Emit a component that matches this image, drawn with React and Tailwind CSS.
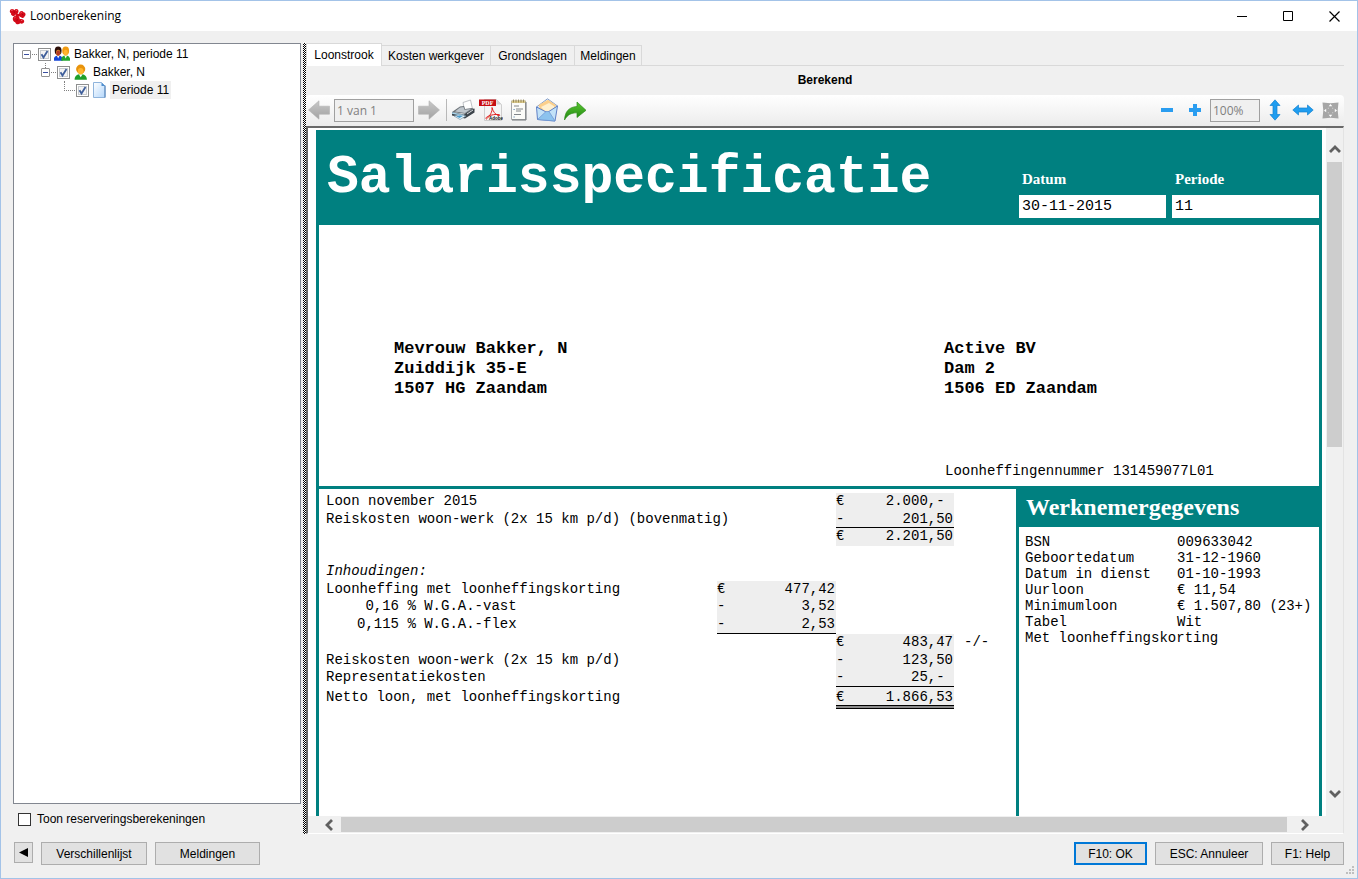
import { useState } from 'react';

const mono = "font-['Liberation_Mono','Courier_New',monospace]";
const serif = "font-['Liberation_Serif','Times_New_Roman',serif]";

const tabs = [
  { name: 'Loonstrook', width: 'w-[76px]' },
  { name: 'Kosten werkgever', width: 'w-[109px]' },
  { name: 'Grondslagen', width: 'w-[84px]' },
  { name: 'Meldingen', width: 'w-[67px]' },
];

const employee = [
  ['BSN', '009633042'],
  ['Geboortedatum', '31-12-1960'],
  ['Datum in dienst', '01-10-1993'],
  ['Uurloon', '€ 11,54'],
  ['Minimumloon', '€ 1.507,80 (23+)'],
  ['Tabel', 'Wit'],
];

const payRows = [
  { label: 'Loon november 2015', total: ['€', '2.000,- '] },
  { label: 'Reiskosten woon-werk (2x 15 km p/d) (bovenmatig)', total: ['-', '201,50'], line: true, tight: true },
  { label: '', total: ['€', '2.201,50'] },
  { label: '', tight: true },
  { label: 'Inhoudingen:', italic: true },
  { label: 'Loonheffing met loonheffingskorting', sub: ['€', '477,42'], tight: true },
  { percent: '0,16', label: ' % W.G.A.-vast', sub: ['-', '3,52'] },
  { percent: '0,115', label: ' % W.G.A.-flex', sub: ['-', '2,53'], line: true },
  { label: '', total: ['€', '483,47'], suffix: '-/-' },
  { label: 'Reiskosten woon-werk (2x 15 km p/d)', total: ['-', '123,50'], tight: true },
  { label: 'Representatiekosten', total: ['-', '25,- '], line: true },
  { label: 'Netto loon, met loonheffingskorting', total: ['€', '1.866,53'], final: true },
];

function Logo() {
  return (
    <svg className="h-[17px] w-[17px]" viewBox="0 0 17 17">
      <g fill="#d40a18">
        <path d="M.8 3.200C1 .8 4 .2 5.400 2.200 6.500.2 9.600.8 9.500 3.200c0 1.600-1 2.800-2.600 3-.5 1.700-2.500 2.200-3.900 1.200C1.600 6.500 2 5.500 2.200 5.200 1.300 5 .8 4.200.8 3.200z" />
        <path d="M10.200 5.200c.3-2.300 3.300-2.800 4.400-1 2.200.3 2.600 3 .9 4.200-.4 1.600-2.800 2-4 .7-1.700-.4-2-2.400-1.300-3.900z" />
        <path d="M3.800 10.200c.4-2.600 3.400-3.400 4.800-1.600 1.800 0 2.400 1.500 2 2.700 2-.9 4.900 0 4.600 2.300-.3 2-2.600 2.600-4 1.700-1.500 1.700-4.700 1.200-5-1-1.600-.6-2.700-2.300-2.400-4.100z" />
        <circle cx="8.500" cy="7.400" r="1.800" />
      </g>
      <path d="M2.300 2.600l1.600-.7M6.800 2.500l1.200-.3M11.500 5l1.300-.8M5.300 10l1.300-.9M12 12.500l1.300-.2" stroke="#f2606c" strokeWidth="1" />
      <path d="M5.300 3.500v1.200M13 6.500l1.200.3M7.500 12.200l1.400-.4" stroke="#8e0410" strokeWidth=".8" />
    </svg>
  );
}

function Person({ hair, body, x = 0 }) {
  return (
    <g transform={`translate(${x} 0)`}>
      <path d="M-.5 14.800c0-3.500 1.800-5.300 5.700-5.300s5.800 1.800 5.800 5.300z" fill={body} />
      <path d="M3.500 9.500L5.200 12.500 7 9.500z" fill="#fff" />
      <circle cx="5.200" cy="4.800" r="4.300" fill={hair} />
      <ellipse cx="5.200" cy="6.800" rx="2.600" ry="3" fill="#ffb52e" />
    </g>
  );
}

function GroupIcon() {
  return (
    <svg className="h-4 w-4" viewBox="0 0 20 16" preserveAspectRatio="none">
      <Person hair="#2a0d08" body="#1446d8" />
      <ellipse cx="5.200" cy="7" rx="2.400" ry="2.800" fill="#b03a24" />
      <Person hair="#f09a10" body="#22a52c" x={9.400} />
    </svg>
  );
}

function PersonIcon() {
  return (
    <svg className="h-4 w-4" viewBox="-2 0 15 15">
      <Person hair="#e8930c" body="#1f9f2a" />
    </svg>
  );
}

function PageIcon() {
  return (
    <svg className="h-4 w-4" viewBox="0 0 16 16">
      <defs>
        <linearGradient id="page" x1="0" y1="0" x2="1" y2="1">
          <stop offset="0" stopColor="#ffffff" />
          <stop offset="1" stopColor="#b4d7fb" />
        </linearGradient>
      </defs>
      <path d="M1.500.5h8l3.500 3.500v11.500H1.500z" fill="url(#page)" stroke="#8fb4dc" />
      <path d="M9.500.5L13 4H9.500z" fill="#4f8fd0" />
      <path d="M13 3.500v12" stroke="#4f7fb5" />
    </svg>
  );
}

function TreeCheck({ id }) {
  const [checked, setChecked] = useState(true);
  return (
    <span className="relative h-[13px] w-[13px] shrink-0">
      <input id={id} type="checkbox" checked={checked} onChange={(e) => setChecked(e.target.checked)}
        className="block h-[13px] w-[13px] appearance-none border border-[#8e8f8f] bg-[#f4f4f4] shadow-[inset_0_0_0_1px_#fff,inset_0_0_0_2px_#c8ccd0]" />
      {checked && (
        <svg className="pointer-events-none absolute inset-0 h-[13px] w-[13px]" viewBox="0 0 13 13">
          <path d="M3.500 6.200l2 3.300 4-6.500" fill="none" stroke="#3f5f9b" strokeWidth="1.800" />
        </svg>
      )}
    </span>
  );
}

function Expander({ label }) {
  return (
    <button aria-label={label} className="flex h-[9px] w-[9px] shrink-0 items-center justify-center rounded-[1px] border border-[#919191] bg-white">
      <span className="h-px w-[5px] bg-[#3a4fa0]" />
    </button>
  );
}

function Chevron({ className = '' }) {
  return (
    <svg className={`h-3 w-3 ${className}`} viewBox="0 0 12 12">
      <path d="M1 9l5-5 5 5" fill="none" stroke="#606060" strokeWidth="2.800" />
    </svg>
  );
}

function GreyArrow({ flip }) {
  return (
    <svg className={flip ? 'h-5 w-[22px] -scale-x-100' : 'h-5 w-[22px]'} viewBox="0 0 22 20">
      <defs>
        <linearGradient id="grey" x1="0" y1="0" x2="0" y2="1">
          <stop offset="0" stopColor="#c8c8c8" />
          <stop offset="1" stopColor="#a2a2a2" />
        </linearGradient>
      </defs>
      <path d="M.5 10L11 .8v5.400h10.500v8H11v5z" fill="url(#grey)" stroke="#b4b4b4" strokeWidth=".6" />
    </svg>
  );
}

function PrinterIcon() {
  return (
    <svg className="h-6 w-6" viewBox="0 0 24 24">
      <path d="M12 4.500l7.500-2.500 2 9-8 1.500z" fill="#fff" stroke="#a5a9ae" strokeWidth=".7" />
      <path d="M1 14l8-5.500 4-.5 1 3 7-1 2.500 1-4 5.500z" fill="#6b7278" />
      <path d="M1 14l12 2.500 10.500-6v4L14 20.500 1 17.500z" fill="#3c434a" />
      <path d="M9 9.500l3.500-.5 1 2.800 6.500-.8-6 4-10-1.500z" fill="#bfc6cc" />
      <path d="M1 14.200l12 2.500v1.600L1 15.800z" fill="#a9d3ea" />
      <path d="M3 18l6-1.500 6 1.500-6 3.500z" fill="#e8f4fb" stroke="#6c8ba0" strokeWidth=".6" />
      <path d="M5 18.200l4-1 3 .8-3.500 2z" fill="#4b9ccc" />
      <path d="M16 16l6-4" stroke="#d9dde0" />
    </svg>
  );
}

function PdfIcon() {
  return (
    <svg className="h-6 w-6" viewBox="0 0 24 24">
      <path d="M5.500 1.500h12l5 5v16h-17z" fill="#f5f5f5" stroke="#c4c4c4" strokeWidth=".8" />
      <path d="M17.500 1.500v5h5z" fill="#d2d2d2" />
      <path d="M0 1.500h17v6.500H0z" fill="#c60d12" />
      <text x="8.500" y="7" textAnchor="middle" fontSize="6" fontWeight="bold" fill="#fff" fontFamily="Liberation Serif, serif">PDF</text>
      <path d="M13 9.500c.8 4-2.500 9-5.500 11.500-1 0-.8-1.500 1-2.500 3.500-1.800 8.500-2.500 12-1.800 1 .8-.5 1.300-1.500.8-3-1.500-5-4-6-8z" fill="none" stroke="#e02020" strokeWidth="1" />
      <text x="17" y="22" textAnchor="middle" fontSize="4.500" fontWeight="bold" fill="#111" fontFamily="Liberation Sans, sans-serif">Adobe</text>
    </svg>
  );
}

function NotepadIcon() {
  return (
    <svg className="h-6 w-6" viewBox="0 0 24 24">
      <path d="M4.500 3h14v18.500h-14z" fill="#fbfbf8" stroke="#a3a5a8" />
      <path d="M4.500 2.500h14v2.500h-14z" fill="#d9c98c" />
      <path d="M6.500 1.500v3M9 1.500v3M11.500 1.500v3M14 1.500v3M16.500 1.500v3" stroke="#8a7a48" strokeWidth=".8" />
      <path d="M7 8h5M9 11h7M9 13h5M7 16.500h7" stroke="#74787e" strokeWidth=".9" />
      <path d="M6.500 11.500h1.200M6.500 19h1.200" stroke="#5a8ab8" strokeWidth="1" />
      <path d="M19 4v18H5" fill="none" stroke="#73767a" strokeWidth="1" />
    </svg>
  );
}

function MailIcon() {
  return (
    <svg className="h-6 w-6" viewBox="0 0 24 24">
      <path d="M1.500 9L12.500.8l10 7.200-10 8z" fill="#e7f0fa" stroke="#7f9ccb" />
      <path d="M3.500 7L13 1.800 21 7l-2 8-8 .5-6-4z" fill="#fbcf8c" />
      <path d="M6 9l8-4 5.500 3.500-2.500 5-6 1z" fill="#fff0cf" />
      <path d="M1.500 9l1 12.500L20 23l2.500-15-10.300 6.500z" fill="#c2e2f8" stroke="#5f80c6" />
      <path d="M2.500 21.500l8.500-8h3l6 9.500z" fill="#8cc3ee" stroke="#6d92d0" strokeWidth=".7" />
    </svg>
  );
}

function ForwardIcon() {
  return (
    <svg className="h-6 w-6" viewBox="0 0 24 24">
      <defs>
        <linearGradient id="green" x1="0" y1="0" x2="0" y2="1">
          <stop offset="0" stopColor="#5cc832" />
          <stop offset="1" stopColor="#1d8410" />
        </linearGradient>
      </defs>
      <path d="M1.500 22c.5-8 4-13 12.500-13.500V4l9 8.300-9 7.200v-4.700c-6 0-9.500 2-12.500 7.200z" fill="url(#green)" stroke="#2c8c1a" strokeWidth=".7" />
    </svg>
  );
}

function DoubleArrow({ vertical }) {
  return (
    <svg className={vertical ? 'h-[22px] w-[22px] rotate-90' : 'h-[22px] w-[22px]'} viewBox="0 0 22 22">
      <path d="M.8 11L6.500 6v3h9V6l5.700 5-5.700 5v-3h-9v3z" fill="#1f9df0" stroke="#1583cf" strokeWidth=".7" />
    </svg>
  );
}

function FullIcon() {
  return (
    <svg className="h-[17px] w-[17px]" viewBox="0 0 17 17">
      <path d="M.5.5l8 .8 8-.8-.8 8 .8 8-8-.8-8 .8.800-8z" fill="#a6a6a6" />
      <path d="M8.500 2l1.800 2.200H6.700zM8.500 15l1.800-2.200H6.700zM2 8.500l2.200-1.800v3.600zM15 8.500l-2.200-1.800v3.600z" fill="#fff" />
      <path d="M5.800 5.800h1v1h-1zM10.200 5.800h1v1h-1zM5.800 10.200h1v1h-1zM10.200 10.200h1v1h-1z" fill="#d4d4d4" />
    </svg>
  );
}

function Amount({ value, line }) {
  if (!value) return <><td /><td /></>;
  const border = line ? 'border-b border-black' : '';
  return (
    <>
      <td className={`bg-[#eeeeee] ${border}`}>{value[0]}</td>
      <td className={`whitespace-pre bg-[#eeeeee] pr-px text-right ${border}`}>{value[1]}</td>
    </>
  );
}

function PayTable() {
  return (
    <table className="w-full table-fixed border-separate border-spacing-0 text-sm leading-4">
      <colgroup>
        <col className="w-[398px]" />
        <col className="w-5" />
        <col className="w-[99px]" />
        <col className="w-5" />
        <col className="w-[98px]" />
        <col />
      </colgroup>
      <tbody>
        {payRows.map((row, i) => (
          <tr key={i} className={`${row.tight ? 'h-[17px]' : 'h-[18px]'} ${row.final ? 'align-bottom' : 'align-top'}`}>
            <td className={`whitespace-pre pl-[7px] ${row.italic ? 'italic' : ''}`}>
              {row.percent && <span className="inline-block w-[73px] text-right">{row.percent}</span>}
              {row.label}
            </td>
            <Amount value={row.sub} line={row.line} />
            <Amount value={row.total} line={row.line} />
            <td className="pl-2.5">{row.suffix}</td>
          </tr>
        ))}
        <tr className="h-1">
          <td colSpan={3} />
          <td colSpan={2} className="border-y border-black bg-[#8c8c8c]" />
          <td />
        </tr>
      </tbody>
    </table>
  );
}

function Payslip() {
  return (
    <article className={`flex min-h-full flex-col border-x-[3px] border-[#008080] text-black ${mono}`}>
      <header className="flex h-[95px] shrink-0 bg-[#008080]">
        <h1 className="flex-1 self-center pl-2 text-[53px] font-bold leading-[60px] text-white">Salarisspecificatie</h1>
        <dl className="flex gap-1.5 pt-10">
          {[['Datum', '30-11-2015'], ['Periode', '11']].map(([name, value]) => (
            <div key={name} className="w-[147px]">
              <dt className={`h-[25px] pl-[3px] text-[15px] font-bold leading-[18px] text-white ${serif}`}>{name}</dt>
              <dd className="h-[23px] bg-white pl-[3px] text-[15px] leading-6">{value}</dd>
            </div>
          ))}
        </dl>
      </header>

      <section className="h-[264px] shrink-0 border-b-[3px] border-[#008080]">
        <div className="flex h-[236px] pt-[114px] text-[17px] font-bold leading-5">
          <address className="flex-1 pl-[75px] not-italic">
            Mevrouw Bakker, N<br />Zuiddijk 35-E<br />1507 HG Zaandam
          </address>
          <address className="w-[375px] not-italic">
            Active BV<br />Dam 2<br />1506 ED Zaandam
          </address>
        </div>
        <p className="ml-auto w-[374px] text-sm leading-5">Loonheffingennummer 131459077L01</p>
      </section>

      <div className="flex flex-1">
        <section className="flex-1 pt-1">
          <PayTable />
        </section>
        <section className="w-[303px] border-l-[3px] border-[#008080]">
          <h2 className={`h-[38px] bg-[#008080] pl-[7px] text-2xl font-bold leading-9 text-white ${serif}`}>Werknemergegevens</h2>
          <table className="ml-1.5 mt-[7px] text-sm leading-4">
            <tbody>
              {employee.map(([name, value]) => (
                <tr key={name}>
                  <th scope="row" className="w-[152px] text-left font-normal">{name}</th>
                  <td className="whitespace-nowrap">{value}</td>
                </tr>
              ))}
              <tr>
                <td colSpan={2}>Met loonheffingskorting</td>
              </tr>
            </tbody>
          </table>
        </section>
      </div>
    </article>
  );
}

function FooterButton({ children, className }) {
  return (
    <button className={`h-[23px] bg-[#e1e1e1] ${className}`}>{children}</button>
  );
}

function App() {
  const [activeTab, setActiveTab] = useState('Loonstrook');
  const [reserve, setReserve] = useState(false);

  return (
    <div className="flex h-screen flex-col border border-[#a3c3e8] bg-[#f0f0f0] font-['Liberation_Sans',Arial,sans-serif] text-xs text-black">
      <header className="flex h-[30px] shrink-0 items-center bg-white pl-2">
        <Logo />
        <span className="flex-1 pl-1 font-['Open_Sans',sans-serif]">Loonberekening</span>
        <button aria-label="Minimaliseren" className="flex h-full w-[46px] items-center justify-center">
          <svg className="h-[11px] w-[11px]" viewBox="0 0 11 11"><path d="M0 5.500h10" stroke="#000" /></svg>
        </button>
        <button aria-label="Maximaliseren" className="flex h-full w-[46px] items-center justify-center">
          <svg className="h-[11px] w-[11px]" viewBox="0 0 11 11"><path d="M.5.5h9v9h-9z" fill="none" stroke="#000" /></svg>
        </button>
        <button aria-label="Sluiten" className="flex h-full w-[46px] items-center justify-center">
          <svg className="h-[11px] w-[11px]" viewBox="0 0 11 11"><path d="M.5.5l10 10M10.500.5l-10 10" stroke="#000" strokeWidth="1.200" /></svg>
        </button>
      </header>

      <main className="flex min-h-0 flex-1 pl-3 pr-[13px] pt-3">
        <aside className="flex w-[288px] shrink-0 flex-col">
          <ul className="flex-1 border border-[#828790] bg-white pl-2 pt-px leading-[18px]">
            <li className="flex h-[18px] items-center">
              <Expander label="Bakker, N, periode 11 inklappen" />
              <span className="ml-px mr-px w-[5px] border-t border-dotted border-[#808080]" />
              <TreeCheck id="run" />
              <label htmlFor="run" className="flex items-center gap-1 pl-[3px]"><GroupIcon />Bakker, N, periode 11</label>
            </li>
            <li className="relative flex h-[18px] items-center pl-[19px]">
              <span className="absolute left-[23px] top-0 h-[5px] border-l border-dotted border-[#808080]" />
              <Expander label="Bakker, N inklappen" />
              <span className="ml-px mr-px w-[5px] border-t border-dotted border-[#808080]" />
              <TreeCheck id="person" />
              <label htmlFor="person" className="flex items-center gap-1 pl-[3px]"><PersonIcon />Bakker, N</label>
            </li>
            <li className="flex h-[18px] items-center pl-[42px]">
              <span className="mr-px h-[10px] w-[11px] self-start border-b border-l border-dotted border-[#808080]" />
              <TreeCheck id="period" />
              <label htmlFor="period" className="flex items-center gap-0.5 pl-[3px]"><PageIcon /><span className="bg-[#f0f0f0] px-0.5">Periode 11</span></label>
            </li>
          </ul>
          <div className="flex h-[30px] items-center pl-[5px]">
            <input id="reserve" type="checkbox" checked={reserve} onChange={(e) => setReserve(e.target.checked)}
              className="h-[13px] w-[13px] appearance-none border border-[#333333] bg-white checked:bg-[#333333]" />
            <label htmlFor="reserve" className="pl-1.5">Toon reserveringsberekeningen</label>
          </div>
        </aside>

        <div className="ml-0.5 w-[3px] shrink-0 bg-[repeating-conic-gradient(#000_0_25%,#fff_0_50%)] bg-[length:2px_2px]" />

        <section className="flex min-w-0 flex-1 flex-col">
          <div role="tablist" className="flex h-[23px] shrink-0 items-end border-b border-[#d9d9d9]">
            {tabs.map(({ name, width }) => (
              <button key={name} role="tab" aria-selected={activeTab === name} onClick={() => setActiveTab(name)}
                className={`border border-b-0 border-[#d9d9d9] ${width} ${activeTab === name ? '-mb-px h-[23px] bg-white' : 'h-5 border-l-0'}`}>
                {name}
              </button>
            ))}
          </div>
          <p className="h-[29px] shrink-0 text-center font-bold leading-[29px]">Berekend</p>

          <div className="flex h-[31px] shrink-0 items-center rounded-t bg-gradient-to-b from-white to-[#ececec] pb-px pr-[5px] font-['Open_Sans',sans-serif] text-[#808080]">
            <button aria-label="Vorige pagina" className="pl-0.5"><GreyArrow /></button>
            <input aria-label="Pagina" defaultValue="1 van 1" className="ml-1 mr-1 h-[23px] w-20 border border-[#a0a0a0] bg-[#f0f0f0] px-0.5" />
            <button aria-label="Volgende pagina"><GreyArrow flip /></button>
            <span className="ml-1.5 mr-1 h-[22px] w-px bg-[#b8b8b8]" />
            <div className="flex flex-1 gap-1">
              <button aria-label="Afdrukken"><PrinterIcon /></button>
              <button aria-label="PDF"><PdfIcon /></button>
              <button aria-label="Rapport"><NotepadIcon /></button>
              <button aria-label="E-mail"><MailIcon /></button>
              <button aria-label="Doorsturen"><ForwardIcon /></button>
            </div>
            <button aria-label="Uitzoomen" className="px-2">
              <svg className="h-3 w-3" viewBox="0 0 12 12"><path d="M0 4h12v4H0z" fill="#2a9df0" /></svg>
            </button>
            <button aria-label="Inzoomen" className="pl-2 pr-[9px]">
              <svg className="h-3 w-3" viewBox="0 0 12 12"><path d="M4 0h4v4h4v4H8v4H4V8H0V4h4z" fill="#2a9df0" /></svg>
            </button>
            <input aria-label="Zoom" defaultValue="100%" className="mr-1 h-[23px] w-[50px] border border-[#a0a0a0] bg-[#f0f0f0] px-0.5" />
            <button aria-label="Paginahoogte"><DoubleArrow vertical /></button>
            <button aria-label="Paginabreedte" className="mx-1.5"><DoubleArrow /></button>
            <button aria-label="Volledig scherm" className="pl-0.5"><FullIcon /></button>
          </div>

          <div className="flex min-h-0 flex-1 flex-col border-b border-l-2 border-r border-t-2 border-b-white border-l-[#696969] border-r-[#e3e3e3] border-t-[#696969] bg-white">
            <div className="flex min-h-0 flex-1">
              <div className="min-w-0 flex-1 overflow-hidden pl-2 pr-1 pt-0.5">
                <Payslip />
              </div>
              <div className="flex w-[17px] shrink-0 flex-col bg-[#f0f0f0] px-px">
                <button aria-label="Omhoog" className="flex h-[34px] items-center justify-center pt-2"><Chevron /></button>
                <div className="flex-1">
                  <div className="h-[46%] bg-[#cdcdcd]" />
                </div>
                <button aria-label="Omlaag" className="flex h-[34px] items-center justify-center pb-2.5"><Chevron className="rotate-180" /></button>
              </div>
            </div>
            <div className="flex h-[17px] shrink-0 items-center bg-[#f0f0f0] pr-[17px]">
              <button aria-label="Naar links" className="flex w-[33px] justify-center pl-2"><Chevron className="-rotate-90" /></button>
              <div className="h-[15px] flex-1 bg-[#cdcdcd]" />
              <button aria-label="Naar rechts" className="flex w-[39px] justify-center pr-1"><Chevron className="rotate-90" /></button>
            </div>
          </div>
        </section>
      </main>

      <footer className="relative flex h-11 shrink-0 gap-2 pl-[13px] pr-[13px] pt-2">
        <button aria-label="Paneel verbergen" className="flex h-[21px] w-[19px] items-center justify-center border border-[#adadad] bg-[#e1e1e1]">
          <svg className="h-[9px] w-[9px]" viewBox="0 0 9 9"><path d="M0 4.500L9 0v9z" fill="#000" /></svg>
        </button>
        <FooterButton className="w-[106px] border border-[#adadad]">Verschillenlijst</FooterButton>
        <FooterButton className="w-[105px] border border-[#adadad]">Meldingen</FooterButton>
        <FooterButton className="ml-auto w-[73px] border-2 border-[#0078d7]">F10: OK</FooterButton>
        <FooterButton className="w-[108px] border border-[#adadad]">ESC: Annuleer</FooterButton>
        <FooterButton className="w-[73px] border border-[#adadad]">F1: Help</FooterButton>
        <svg className="absolute bottom-0.5 right-0.5 h-2.5 w-2.5" viewBox="0 0 10 10">
          <path d="M7 0h2v2H7zM7 3h2v2H7zM4 3h2v2H4zM7 6h2v2H7zM4 6h2v2H4zM1 6h2v2H1z" fill="#bfbfbf" />
        </svg>
      </footer>
    </div>
  );
}

export default App;
